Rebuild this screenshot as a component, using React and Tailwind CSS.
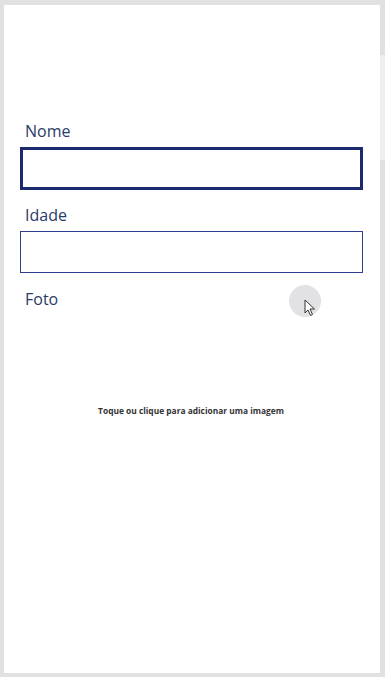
import React from "react";

export default function App() {
  return (
    <div className="w-[385px] h-[677px] bg-[#e1e1e1] pt-[5px] pl-[4px] pr-[5px] pb-[4px] relative overflow-hidden" style={{ fontFamily: '"Open Sans", "Noto Sans", sans-serif' }}>
      <div className="absolute right-0 top-[55px] w-[5px] h-[105px] bg-[#efefef]" />
      <div className="bg-white h-full w-full pt-[114px] px-[16px] relative">
        <div className="h-[24px] leading-[24px] text-[16px] text-[#2b3a67] pl-[5px]">Nome</div>
        <div className="mt-[4px] h-[43px] w-[343px] border-[3px] border-[#1b2a6e] bg-white" />
        <div className="mt-[13px] h-[24px] leading-[24px] text-[16px] text-[#2b3a67] pl-[5px]">Idade</div>
        <div className="mt-[4px] h-[42px] w-[343px] border-[1.5px] border-[#2d3d8f] bg-white" />
        <div className="relative mt-[14px] h-[24px] leading-[24px] text-[16px] text-[#2b3a67] pl-[5px]">
          Foto
          <div className="absolute left-[269px] top-[-2px] w-[32px] h-[32px] rounded-full bg-[#e2e2e5]" />
          <svg className="absolute left-[284px] top-[12px]" width="12" height="18" viewBox="0 0 12 18">
            <path d="M1 1 L1 14 L4 11 L6.5 16.5 L8.5 15.5 L6 10 L10.5 10 Z" fill="white" stroke="#333" strokeWidth="1" strokeLinejoin="round" />
          </svg>
        </div>
        <div className="mt-[94px] text-center text-[8.4px] font-bold text-[#333] leading-[12px] pr-[2px]">
          Toque ou clique para adicionar uma imagem
        </div>
      </div>
    </div>
  );
}
